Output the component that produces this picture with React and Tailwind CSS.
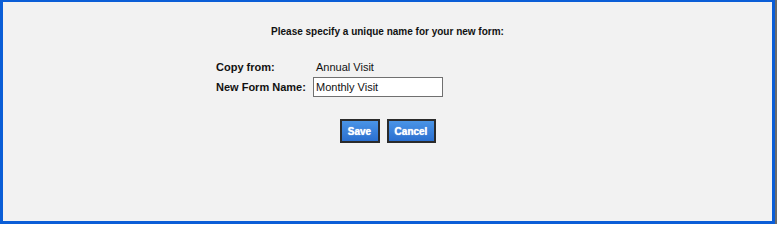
export default function App() {
  return (
    <div className="w-[777px] h-[224px] bg-[#6b6b6b] pr-[2px]" style={{ fontFamily: '"Liberation Sans", Arial, sans-serif' }}>
      <div className="h-full bg-[#f2f2f2] border-[#0b5ed7] border-t-2 border-l-[3px] border-r-[3px] border-b-[3px] flex flex-col">
        <div className="pt-[23px] text-center text-[10px] font-bold text-[#111] leading-[14px]">
          Please specify a unique name for your new form:
        </div>
        <div className="mt-[18px] pl-[213px] flex flex-col text-[11px] text-[#111]">
          <div className="flex items-center h-[20px]">
            <div className="w-[97px] font-bold">Copy from:</div>
            <div className="pl-[3px]">Annual Visit</div>
          </div>
          <div className="flex items-center h-[20px]">
            <div className="w-[97px] font-bold">New Form Name:</div>
            <input
              defaultValue="Monthly Visit"
              className="w-[130px] h-[20px] border border-[#707070] bg-white px-[2px] text-[11px] text-[#111] outline-none"
              style={{ fontFamily: '"Liberation Sans", Arial, sans-serif' }}
            />
          </div>
        </div>
        <div className="mt-[22px] flex justify-center gap-[7px]">
          <button className="w-[40px] h-[24px] border-2 border-[#2b2b2b] bg-gradient-to-b from-[#4a94e6] to-[#2a6fd0] text-white text-[10px] font-bold [text-shadow:0_0_1px_#fff]">
            Save
          </button>
          <button className="w-[49px] h-[24px] border-2 border-[#2b2b2b] bg-gradient-to-b from-[#4a94e6] to-[#2a6fd0] text-white text-[10px] font-bold [text-shadow:0_0_1px_#fff]">
            Cancel
          </button>
        </div>
      </div>
    </div>
  );
}
